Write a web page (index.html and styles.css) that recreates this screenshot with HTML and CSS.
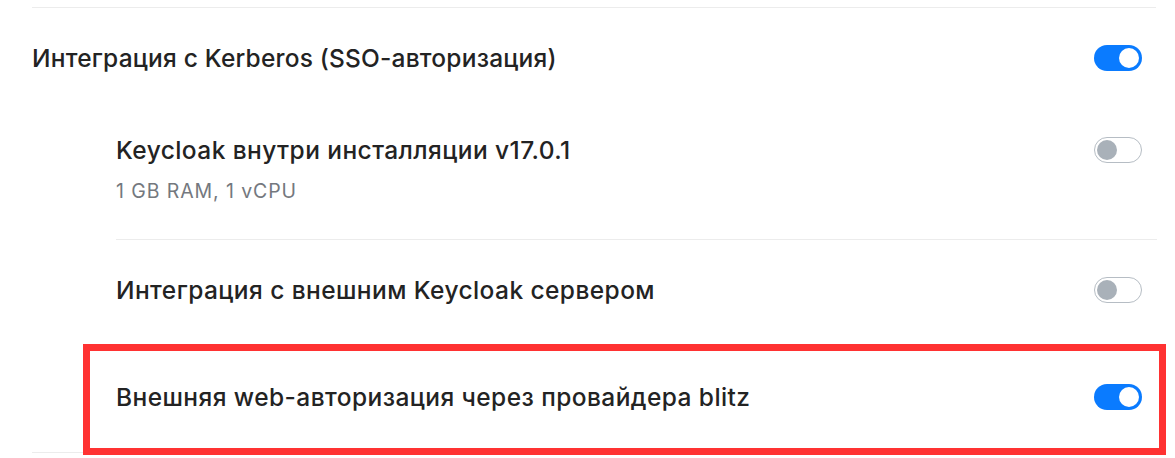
FILE: index.html
```html
<!DOCTYPE html>
<html lang="ru">
<head>
<meta charset="utf-8">
<link rel="stylesheet" href="styles.css">
</head>
<body>
<div class="section">
  <div class="row main-row">
    <div class="title">Интеграция с Kerberos (SSO-авторизация)</div>
    <span class="toggle on"><span class="knob"></span></span>
  </div>
  <div class="sub-list">
    <div class="row sub-row first">
      <div class="text">
        <div class="title">Keycloak внутри инсталляции v17.0.1</div>
        <div class="subtitle">1 GB RAM, 1 vCPU</div>
      </div>
      <span class="toggle off"><span class="knob"></span></span>
    </div>
    <div class="row sub-row second">
      <div class="title">Интеграция с внешним Keycloak сервером</div>
      <span class="toggle off"><span class="knob"></span></span>
    </div>
    <div class="row sub-row third">
      <div class="title">Внешняя web-авторизация через провайдера blitz</div>
      <span class="toggle on"><span class="knob"></span></span>
    </div>
  </div>
</div>
<div class="highlight"></div>
</body>
</html>
```
FILE: styles.css
```css
* { box-sizing: border-box; }
html, body {
  margin: 0;
  padding: 0;
  background: #ffffff;
}
body {
  font-family: "Inter", "Noto Sans", sans-serif;
  color: #232323;
  width: 1175px;
  height: 458px;
  overflow: hidden;
  position: relative;
}
.section {
  margin: 7px 0 0 32px;
  width: 1124px;
  border-top: 1px solid #ececec;
  border-bottom: 1px solid #ececec;
}
.row {
  display: flex;
  align-items: center;
  justify-content: space-between;
}
.main-row {
  height: 100px;
  padding-right: 14px;
}
.main-row .title {
  letter-spacing: 0.2px;
}
.title {
  font-size: 24.5px;
  font-weight: 500;
  line-height: 32px;
  letter-spacing: 0.42px;
}
.subtitle {
  margin-top: 12px;
  font-size: 19.5px;
  font-weight: 400;
  line-height: 26px;
  letter-spacing: 0.9px;
  color: #74787e;
}
.sub-list {
  margin-left: 84px;
  width: 1041px;
}
.sub-row {
  padding-right: 15px;
}
.sub-row.first {
  height: 132px;
  padding-top: 26px;
  padding-bottom: 35px;
  align-items: flex-start;
  border-bottom: 1px solid #ececec;
}
.sub-row.first .toggle {
  margin-top: 3px;
}
.sub-row.second {
  height: 104px;
  padding-bottom: 4px;
}
.sub-row.third {
  height: 108px;
  padding-bottom: 3px;
}
.toggle {
  position: relative;
  display: block;
  flex: none;
  width: 48px;
  height: 26px;
  border-radius: 13px;
}
.toggle .knob {
  position: absolute;
  top: 3px;
  width: 20px;
  height: 20px;
  border-radius: 50%;
}
.toggle.on {
  background: #0a7bff;
}
.toggle.on .knob {
  right: 3px;
  background: #ffffff;
}
.toggle.off {
  background: #ffffff;
  border: 1px solid #b6bdc4;
}
.toggle.off .knob {
  top: 2px;
  left: 2px;
  background: #a9b1b9;
}
.highlight {
  position: absolute;
  left: 83px;
  top: 344px;
  width: 1083px;
  height: 111px;
  border: 7px solid #ff3232;
  pointer-events: none;
}
```
